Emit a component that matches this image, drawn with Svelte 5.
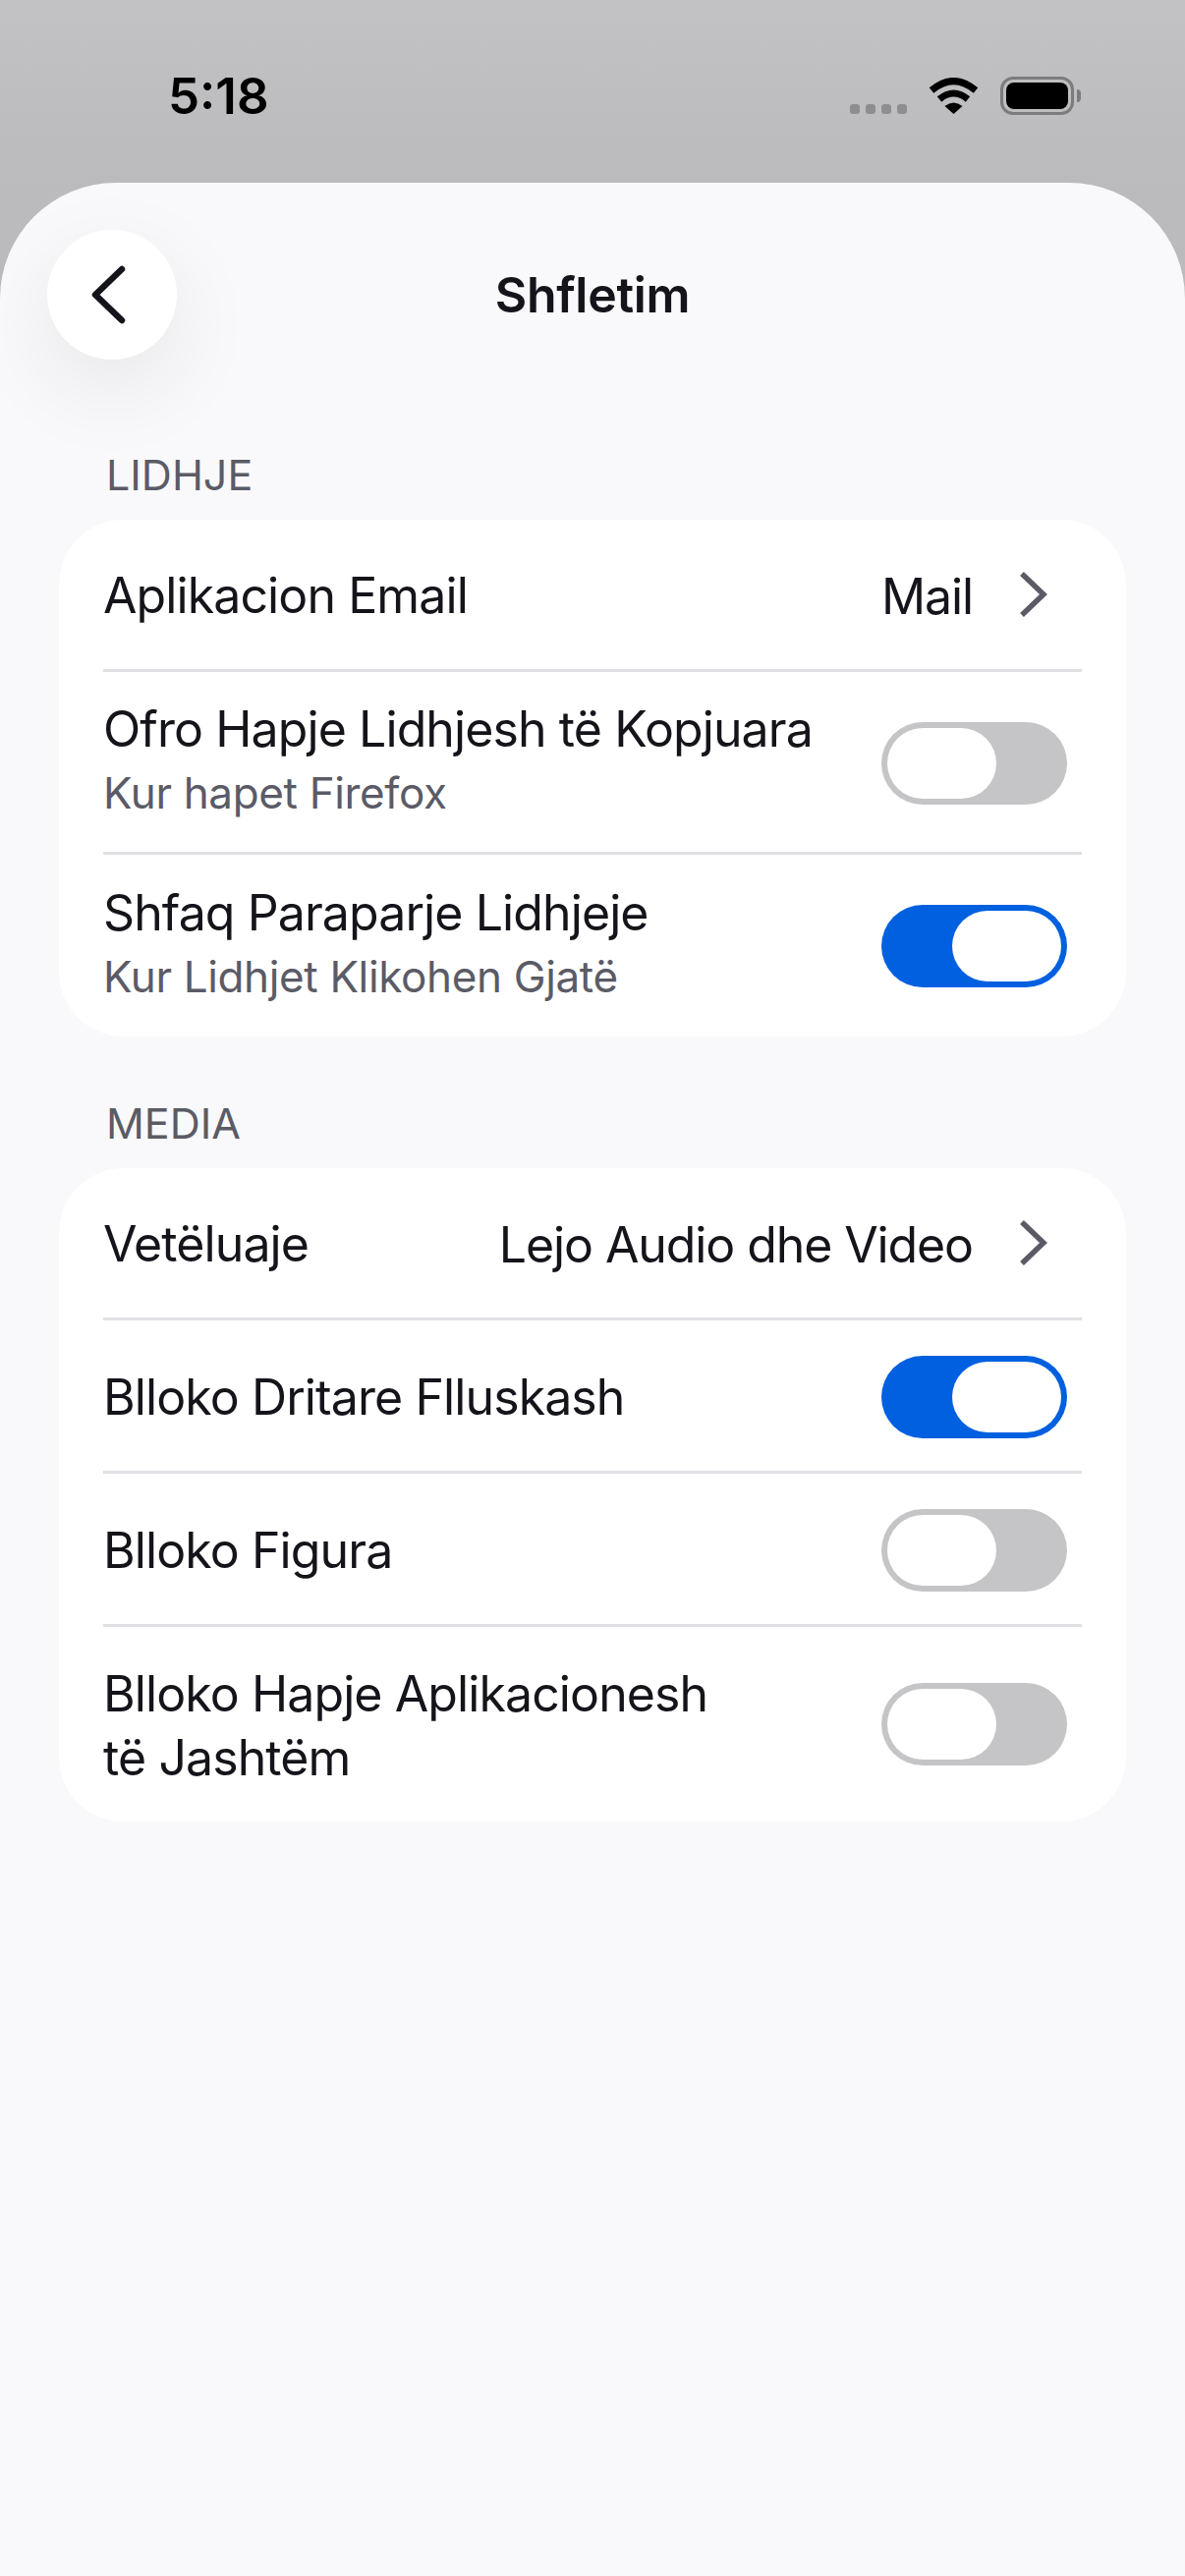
<script>
  const sections = [
    {
      title: "LIDHJE",
      rows: [
        { label: "Aplikacion Email", value: "Mail", h: 152 },
        { label: "Ofro Hapje Lidhjesh të Kopjuara", sub: "Kur hapet Firefox", on: false, h: 183 },
        { label: "Shfaq Paraparje Lidhjeje", sub: "Kur Lidhjet Klikohen Gjatë", on: true, h: 185 }
      ]
    },
    {
      title: "MEDIA",
      rows: [
        { label: "Vetëluaje", value: "Lejo Audio dhe Video", h: 152 },
        { label: "Blloko Dritare Flluskash", on: true, h: 153 },
        { label: "Blloko Figura", on: false, h: 153 },
        { label: "Blloko Hapje Aplikacionesh të Jashtëm", on: false, h: 198 }
      ]
    }
  ];
</script>

<div class="page">
  <div class="status">
    <span class="time">5:18</span>
    <div class="status-icons">
      <div class="dots"><i></i><i></i><i></i><i></i></div>
      <svg class="wifi" width="51" height="37" viewBox="0 0 51 37">
        <path d="M3 13Q25.5-6 48 13" fill="none" stroke="#000" stroke-width="7" />
        <path d="M11 22Q25.5 10 40 22" fill="none" stroke="#000" stroke-width="7" />
        <path d="M16.5 29Q25.5 22 34.5 29L25.5 37Z" fill="#000" />
      </svg>
      <div class="battery"><div class="battery-fill"></div></div>
      <div class="battery-tip"></div>
    </div>
  </div>

  <div class="sheet">
    <header class="nav">
      <button class="back" aria-label="Back">
        <svg width="36" height="60" viewBox="0 0 36 60">
          <path d="M32 4L5 30L32 56" fill="none" stroke="#15141a" stroke-width="6.5" stroke-linecap="round" stroke-linejoin="round" />
        </svg>
      </button>
      <h1>Shfletim</h1>
    </header>

    {#each sections as section}
      <section>
        <h2>{section.title}</h2>
        <div class="card">
          {#each section.rows as row, i}
            {#if i > 0}<div class="sep"></div>{/if}
            <div class="row" style="height: {row.h}px">
              <div class="text" class:two={row.sub}>
                <div class="label">{row.label}</div>
                {#if row.sub}<div class="sub">{row.sub}</div>{/if}
              </div>
              {#if row.value}
                <span class="value">{row.value}</span>
                <svg class="chev" width="30" height="48" viewBox="0 0 30 48">
                  <path d="M4 3L26 24L4 45" fill="none" stroke="#5b5b66" stroke-width="5.5" />
                </svg>
              {:else}
                <div class="toggle" class:on={row.on}><div class="knob"></div></div>
              {/if}
            </div>
          {/each}
        </div>
      </section>
    {/each}
  </div>
</div>

<style>
  :global(body) {
    margin: 0;
    background: #f9f9fb;
  }

  .page {
    width: 1206px;
    height: 2622px;
    overflow: hidden;
    font-family: Inter, "Liberation Sans", sans-serif;
    color: #15141a;
    background: linear-gradient(#c2c2c4, #bbbbbd 186px, #bbbbbd 400px);
  }

  .status {
    height: 186px;
    box-sizing: border-box;
    padding: 72px 0 0 171px;
    display: flex;
    justify-content: space-between;
  }

  .time {
    font-size: 51px;
    font-weight: 600;
    line-height: 52px;
    color: #000;
  }

  .status-icons {
    display: flex;
    align-items: flex-start;
    padding: 6px 106px 0 0;
  }

  .dots {
    display: flex;
    gap: 6px;
    margin: 28px 22px 0 0;
  }

  .dots i {
    width: 10px;
    height: 10px;
    border-radius: 3px;
    background: #8e8e90;
  }

  .wifi {
    margin: 1px 22px 0 0;
  }

  .battery {
    width: 75px;
    height: 39px;
    box-sizing: border-box;
    border: 3px solid #7c7c7e;
    border-radius: 13px;
    padding: 3px;
  }

  .battery-fill {
    height: 100%;
    background: #000;
    border-radius: 8px;
  }

  .battery-tip {
    width: 4px;
    height: 13px;
    margin: 13px 0 0 3px;
    background: #7c7c7e;
    border-radius: 0 4px 4px 0;
  }

  .sheet {
    height: 2436px;
    background: #f9f9fb;
    border-radius: 118px 118px 0 0;
  }

  .nav {
    position: relative;
    height: 271px;
    display: flex;
    justify-content: center;
  }

  .back {
    position: absolute;
    left: 48px;
    top: 48px;
    width: 132px;
    height: 132px;
    padding: 0 8px 0 0;
    border: 0;
    border-radius: 50%;
    background: #fff;
    box-shadow: 0 30px 90px rgba(0, 0, 0, 0.08);
    display: flex;
    align-items: center;
    justify-content: center;
  }

  h1 {
    margin: 84px 0 0;
    font-size: 50px;
    font-weight: 600;
    line-height: 60px;
    letter-spacing: -0.3px;
  }

  h2 {
    margin: 0 0 0 48px;
    font-size: 43px;
    font-weight: 400;
    line-height: 52px;
    color: #5b5b66;
  }

  section {
    padding: 0 60px;
    margin-bottom: 62px;
  }

  .card {
    margin-top: 20px;
    padding: 0 45px;
    background: #fff;
    border-radius: 66px;
  }

  .sep {
    height: 3px;
    background: #e0e0e6;
  }

  .row {
    display: flex;
    align-items: center;
  }

  .text {
    flex: 1;
    min-width: 0;
    padding-top: 3px;
  }

  .text.two {
    padding: 0 0 8px;
  }

  .label {
    max-width: 640px;
    font-size: 50px;
    line-height: 65px;
    letter-spacing: -0.9px;
  }

  .two .label {
    max-width: none;
    white-space: nowrap;
  }

  .sub {
    margin-top: 6px;
    font-size: 44px;
    line-height: 52px;
    letter-spacing: -0.35px;
    color: #5b5b66;
  }

  .value {
    font-size: 50px;
    letter-spacing: -1.1px;
    white-space: nowrap;
    padding-top: 3px;
  }

  .chev {
    margin: 0 35px 0 46px;
  }

  .toggle {
    box-sizing: border-box;
    width: 189px;
    height: 84px;
    margin: 3px 15px 0 0;
    padding: 6px;
    border-radius: 42px;
    background: #c5c5c7;
    display: flex;
  }

  .row:last-child .toggle {
    margin-top: 0;
  }

  .toggle.on {
    background: #0060df;
    justify-content: flex-end;
  }

  .knob {
    width: 111px;
    height: 72px;
    border-radius: 36px;
    background: #fff;
  }
</style>
